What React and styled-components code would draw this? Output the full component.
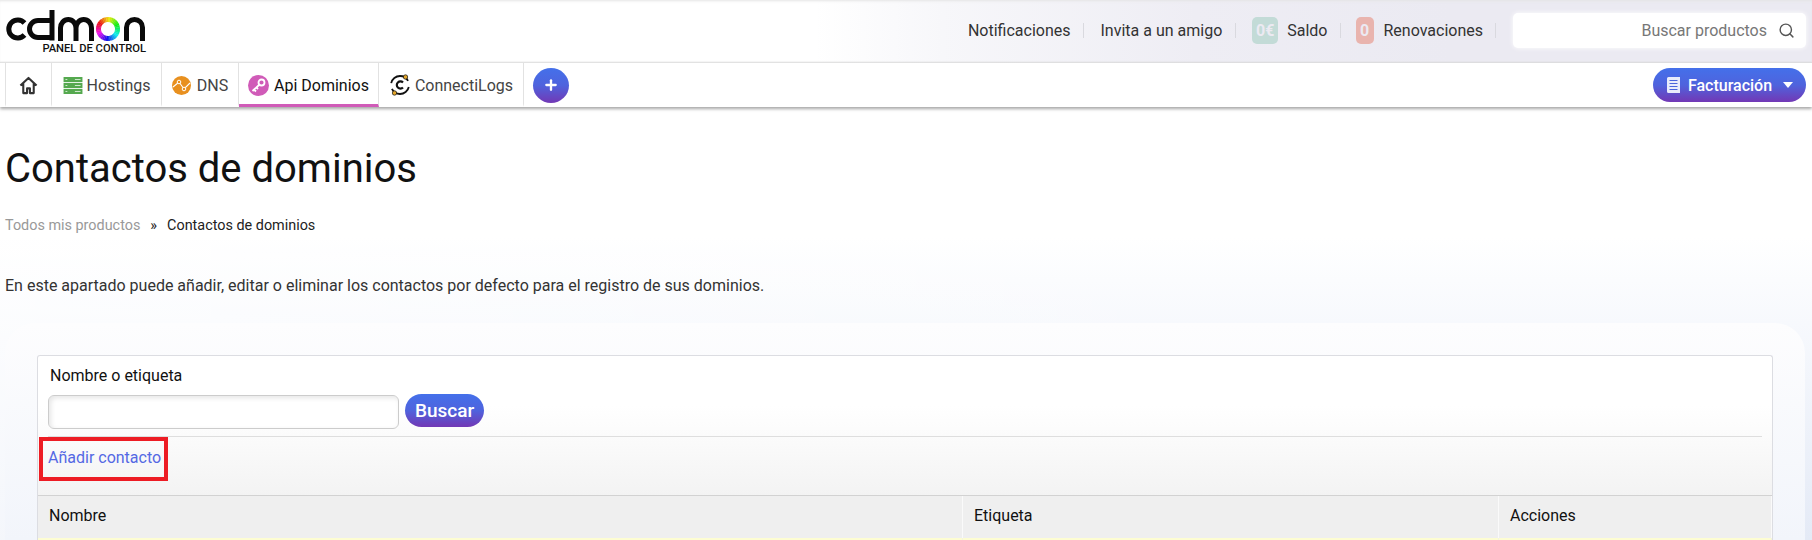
import styled, { createGlobalStyle } from "styled-components";
import { Plus, Search } from "lucide-react";

const Global = createGlobalStyle`
  * { box-sizing: border-box; }
  html, body { margin: 0; padding: 0; height: 540px; overflow: hidden; background: #fff; }
  #root { height: 540px; overflow: hidden; }
  body { font-family: Roboto, "Liberation Sans", sans-serif; color: #333; }
`;

const BRAND = "linear-gradient(180deg, #4470ea 0%, #4f63dd 50%, #7238b5 100%)";

const TopBar = styled.header`
  height: 63px;
  display: flex;
  align-items: center;
  justify-content: space-between;
  padding: 0 6px 2px 5px;
  background: linear-gradient(90deg, #fff 0%, #fff 45%, #f7f7fa 52%, #eeedf4 66%, #ebeaf2 80%, #ebeaf2 100%);
  box-shadow: inset 0 3px 3px -2px #e4e4e4, inset 0 -2px 2px -1px #ddd;
`;

const TopNav = styled.nav`
  display: flex;
  align-items: center;
  font-size: 16px;
  color: #333;
`;

const NavItem = styled.span`
  display: flex;
  align-items: center;
  height: 27px;
  padding-right: ${(p) => p.$pr}px;
  margin-right: ${(p) => p.$mr}px;
  position: relative;
  white-space: nowrap;
  &::after {
    content: "";
    position: absolute;
    right: 0;
    top: 6px;
    height: 15px;
    width: 1px;
    background: #d9d9df;
  }
`;

const Badge = styled.b`
  height: 27px;
  min-width: ${(p) => p.$w}px;
  border-radius: 5px;
  margin-right: ${(p) => p.$mr}px;
  background: ${(p) => p.$bg};
  color: #eceaf2;
  font-size: 16px;
  font-weight: 700;
  display: grid;
  place-items: center;
`;

const SearchBox = styled.div`
  width: 293px;
  height: 35px;
  margin-left: 1px;
  display: flex;
  align-items: center;
  justify-content: flex-end;
  gap: 11px;
  padding-right: 11px;
  background: #fff;
  border-radius: 5px;
  box-shadow: 0 0 5px #fff;
  color: #777;
  svg { color: #555; }
`;

const TabBar = styled.div`
  height: 44px;
  display: flex;
  align-items: stretch;
  padding: 0 6px 0 5px;
  background: #fff;
  box-shadow: 0 2px 3px rgba(0, 0, 0, 0.35);
  position: relative;
`;

const Tab = styled.div`
  flex: none;
  display: flex;
  align-items: center;
  justify-content: center;
  gap: ${(p) => p.$gap || 5}px;
  width: ${(p) => p.$w}px;
  font-size: 16px;
  color: ${(p) => (p.$active ? "#111" : "#444")};
  border-right: 1px solid #e2e2e2;
  border-left: ${(p) => (p.$first ? "1px solid #e2e2e2" : "none")};
  border-bottom: 3px solid ${(p) => (p.$active ? "#d05bb8" : "transparent")};
  padding-top: 3px;
`;

const RoundPlus = styled.button`
  align-self: center;
  margin-left: 9px;
  width: 36px;
  height: 35px;
  border: 0;
  border-radius: 50%;
  background: ${BRAND};
  color: #fff;
  display: grid;
  place-items: center;
  padding: 0;
`;

const Billing = styled.button`
  align-self: center;
  margin-left: auto;
  width: 153px;
  height: 34px;
  border: 0;
  border-radius: 17px;
  background: ${BRAND};
  color: #fff;
  font: 500 16px Roboto, sans-serif;
  display: flex;
  align-items: center;
  justify-content: center;
  gap: 8px;
  padding: 0;
`;

const Main = styled.main`
  height: 433px;
  overflow: hidden;
  padding: 0 7px 0 5px;
  background:
    linear-gradient(90deg, rgba(255, 255, 255, 0.6), rgba(255, 255, 255, 0) 70%),
    linear-gradient(180deg, #fff 0px, #fff 130px, #f7f9fd 216px, #e4eaf6 433px);
`;

const Title = styled.h1`
  margin: 0;
  padding-top: 38px;
  font-size: 40px;
  line-height: 47px;
  font-weight: 400;
  color: #111;
`;

const Crumbs = styled.div`
  margin-top: 24px;
  display: flex;
  gap: 10px;
  font-size: 14.4px;
  line-height: 20px;
  color: #222;
  span:first-child { color: #999; }
`;

const Intro = styled.p`
  margin: 40px 0 0;
  font-size: 16px;
  line-height: 20px;
  color: #333;
`;

const Card = styled.section`
  margin-top: 27px;
  height: 217px;
  padding: 32px 32px 0 32px;
  border-radius: 30px 30px 0 0;
  background: linear-gradient(180deg, #fdfdfe 0%, #f2f5fb 100%);
`;

const Panel = styled.div`
  height: 185px;
  overflow: hidden;
  border: 1px solid #dcdde2;
  border-bottom: 0;
  border-radius: 3px 3px 0 0;
  background: linear-gradient(180deg, #fff 0px, #fff 50px, #f3f3f3 140px);
`;

const Filter = styled.form`
  margin: 0 10px 0 10px;
  height: 81px;
  border-bottom: 1px solid #dedede;
  padding-top: 10px;
`;

const Label = styled.label`
  display: block;
  margin-left: 2px;
  font-size: 16px;
  line-height: 19px;
  color: #111;
`;

const FilterRow = styled.div`
  display: flex;
  align-items: flex-start;
  gap: 6px;
  margin-top: 9px;
`;

const TextInput = styled.input`
  width: 351px;
  height: 34px;
  margin-top: 1px;
  border: 1px solid #ccc;
  border-radius: 6px;
  background: #fff;
  box-shadow: inset 2px 2px 5px rgba(0, 0, 0, 0.1);
`;

const SearchButton = styled.button`
  width: 79px;
  height: 33px;
  border: 0;
  border-radius: 17px;
  background: ${BRAND};
  color: #fff;
  font: 500 19px Roboto, sans-serif;
  padding: 0;
`;

const AddRow = styled.div`
  height: 58px;
  margin-left: 1px;
`;

const AddLink = styled.a`
  display: flex;
  align-items: center;
  width: 129px;
  height: 44px;
  padding: 0 0 4px 5px;
  border: 4px solid #ed1c24;
  color: #5468e4;
  font-size: 16px;
  white-space: nowrap;
`;

const ColumnGrid = styled.div`
  display: grid;
  grid-template-columns: 925px 536px 1fr;
`;

const HeaderRow = styled(ColumnGrid)`
  height: 43px;
  border-top: 1px solid #d2d2d2;
  background: #efefef;
`;

const HeaderCell = styled.div`
  display: flex;
  align-items: center;
  padding: 0 0 3px 11px;
  font-size: 16px;
  color: #111;
  border-right: 1px solid #fafafa;
`;

const YellowRow = styled(ColumnGrid)`
  height: 20px;
  background: #fdfdd2;
`;

const YellowCell = styled.div`
  border-right: 1px solid #f4f4e0;
`;

const LogoWrap = styled.div`
  position: relative;
  flex: none;
  width: 141px;
  height: 46px;
`;

const LogoCaption = styled.span`
  position: absolute;
  right: 0;
  bottom: -1px;
  font-size: 11.2px;
  line-height: 12px;
  font-weight: 500;
  color: #111;
  white-space: nowrap;
`;

// ring of the "o" in the logo, one short arc per hue step
const ringSegments = Array.from({ length: 36 }, (_, i) => {
  const a = (i * 10 * Math.PI) / 180;
  const b = ((i + 1.15) * 10 * Math.PI) / 180;
  const pt = (t) => `${(108 + 9.5 * Math.sin(t)).toFixed(2)} ${(29 - 9.5 * Math.cos(t)).toFixed(2)}`;
  return { d: `M${pt(a)}A9.5 9.5 0 0 1 ${pt(b)}`, color: `hsl(${60 + i * 10}, 85%, 50%)` };
});

const Logo = () => (
  <svg width="141" height="46" viewBox="5 8 141 46" fill="none">
    <g stroke="#0a0a0a" strokeWidth="5">
      <path d="M24.5 23A9 9 0 1 0 24.5 35" />
      <path d="M52 10V40.5M52 20.5H38a8.5 8.5 0 0 0 0 17H52" />
      <path d="M60.5 41V28a7.75 8.5 0 0 1 15.5 0V41M76 28a7.75 8.5 0 0 1 15.5 0V41" />
      <path d="M126.5 41V27.5a8 8 0 0 1 16 0V41" />
    </g>
    <g strokeWidth="5">
      {ringSegments.map((s) => (
        <path key={s.d} d={s.d} stroke={s.color} />
      ))}
    </g>
  </svg>
);

const HomeIcon = () => (
  <svg width="19" height="19" viewBox="0 0 20 20" fill="none" stroke="#333" strokeWidth="2.2">
    <path d="M1.5 10 10 2l8.5 8M4.5 8v10h4v-5h3v5h4V8" strokeLinejoin="round" />
  </svg>
);

const ServerIcon = () => (
  <svg width="20" height="17" viewBox="0 0 20 18">
    {[0, 6.3, 12.6].map((y) => (
      <g key={y}>
        <rect y={y} width="20" height="5.4" fill="#55a94f" />
        <rect x="2" y={y + 2.2} width="2" height="1" fill="#d7ecd5" />
        <rect x="12" y={y + 2.2} width="6" height="1" fill="#d7ecd5" />
      </g>
    ))}
  </svg>
);

const DnsIcon = () => (
  <svg width="19" height="19" viewBox="0 0 19 19">
    <circle cx="9.5" cy="9.5" r="9.5" fill="#e8901f" />
    <path d="M1 11 7 6l5 7 6-6" fill="none" stroke="#fff" strokeWidth="1.1" />
    <circle cx="7" cy="6" r="1.8" fill="#e8901f" stroke="#fff" />
    <circle cx="12" cy="13" r="1.8" fill="#e8901f" stroke="#fff" />
  </svg>
);

const KeyIcon = () => (
  <svg width="21" height="21" viewBox="0 0 21 21">
    <circle cx="10.5" cy="10.5" r="10.5" fill="#d05bb8" />
    <circle cx="13.5" cy="7.5" r="3" fill="none" stroke="#fff" strokeWidth="1.8" />
    <path d="M11 10 4.5 16M6 14.5l2 2M8.5 12.5l1.5 1.5" stroke="#fff" strokeWidth="1.8" />
  </svg>
);

const LogsIcon = () => (
  <svg width="22" height="24" viewBox="0 0 22 24" fill="none">
    <circle cx="11" cy="12" r="9" stroke="#111" strokeWidth="1.8" strokeDasharray="22 6" strokeDashoffset="-2" />
    <path d="M14 9.5A3.6 3.6 0 1 0 14 14.5" stroke="#111" strokeWidth="2.2" />
    <circle cx="16.5" cy="4" r="2.2" fill="#e2a52b" stroke="#111" strokeWidth=".7" />
    <circle cx="5.5" cy="20" r="2.2" fill="#e2a52b" stroke="#111" strokeWidth=".7" />
  </svg>
);

const BookIcon = () => (
  <svg width="14" height="16" viewBox="0 0 14 16">
    <path d="M1 1.5A1.5 1.5 0 0 1 2.5 0H14v16H2.5A1.5 1.5 0 0 1 1 14.5Z" fill="#e8ecfb" />
    <path d="M3.5 3.5h8M3.5 6.5h8M3.5 9.5h8M3.5 12.5h8" stroke="#4a66dc" />
  </svg>
);

const Caret = styled.i`
  width: 0;
  height: 0;
  margin-left: 3px;
  border-left: 5px solid transparent;
  border-right: 5px solid transparent;
  border-top: 6px solid #fff;
`;

export default function App() {
  return (
    <>
      <Global />
      <TopBar>
        <LogoWrap>
          <Logo />
          <LogoCaption>PANEL DE CONTROL</LogoCaption>
        </LogoWrap>
        <TopNav>
          <NavItem $pr={14} $mr={16}>Notificaciones</NavItem>
          <NavItem $pr={14} $mr={16}>Invita a un amigo</NavItem>
          <NavItem $pr={13} $mr={15}>
            <Badge $w={26} $mr={9} $bg="#c3dbd7">0€</Badge>Saldo
          </NavItem>
          <NavItem $pr={13} $mr={16}>
            <Badge $w={18} $mr={10} $bg="#e9b4ae">0</Badge>Renovaciones
          </NavItem>
          <SearchBox>
            Buscar productos
            <Search size={17} strokeWidth={2} />
          </SearchBox>
        </TopNav>
      </TopBar>
      <TabBar>
        <Tab $w={47} $first><HomeIcon /></Tab>
        <Tab $w={110} $gap={4}><ServerIcon />Hostings</Tab>
        <Tab $w={77} $gap={6}><DnsIcon />DNS</Tab>
        <Tab $w={140} $active><KeyIcon />Api Dominios</Tab>
        <Tab $w={145} $gap={4}><LogsIcon />ConnectiLogs</Tab>
        <RoundPlus><Plus size={16} strokeWidth={3.5} /></RoundPlus>
        <Billing><BookIcon />Facturación<Caret /></Billing>
      </TabBar>
      <Main>
        <Title>Contactos de dominios</Title>
        <Crumbs>
          <span>Todos mis productos</span>
          <span>»</span>
          <span>Contactos de dominios</span>
        </Crumbs>
        <Intro>
          En este apartado puede añadir, editar o eliminar los contactos por defecto para el registro de sus dominios.
        </Intro>
        <Card>
          <Panel>
            <Filter>
              <Label>Nombre o etiqueta</Label>
              <FilterRow>
                <TextInput />
                <SearchButton type="button">Buscar</SearchButton>
              </FilterRow>
            </Filter>
            <AddRow>
              <AddLink>Añadir contacto</AddLink>
            </AddRow>
            <HeaderRow>
              <HeaderCell>Nombre</HeaderCell>
              <HeaderCell>Etiqueta</HeaderCell>
              <HeaderCell>Acciones</HeaderCell>
            </HeaderRow>
            <YellowRow>
              <YellowCell />
              <YellowCell />
              <YellowCell />
            </YellowRow>
          </Panel>
        </Card>
      </Main>
    </>
  );
}
